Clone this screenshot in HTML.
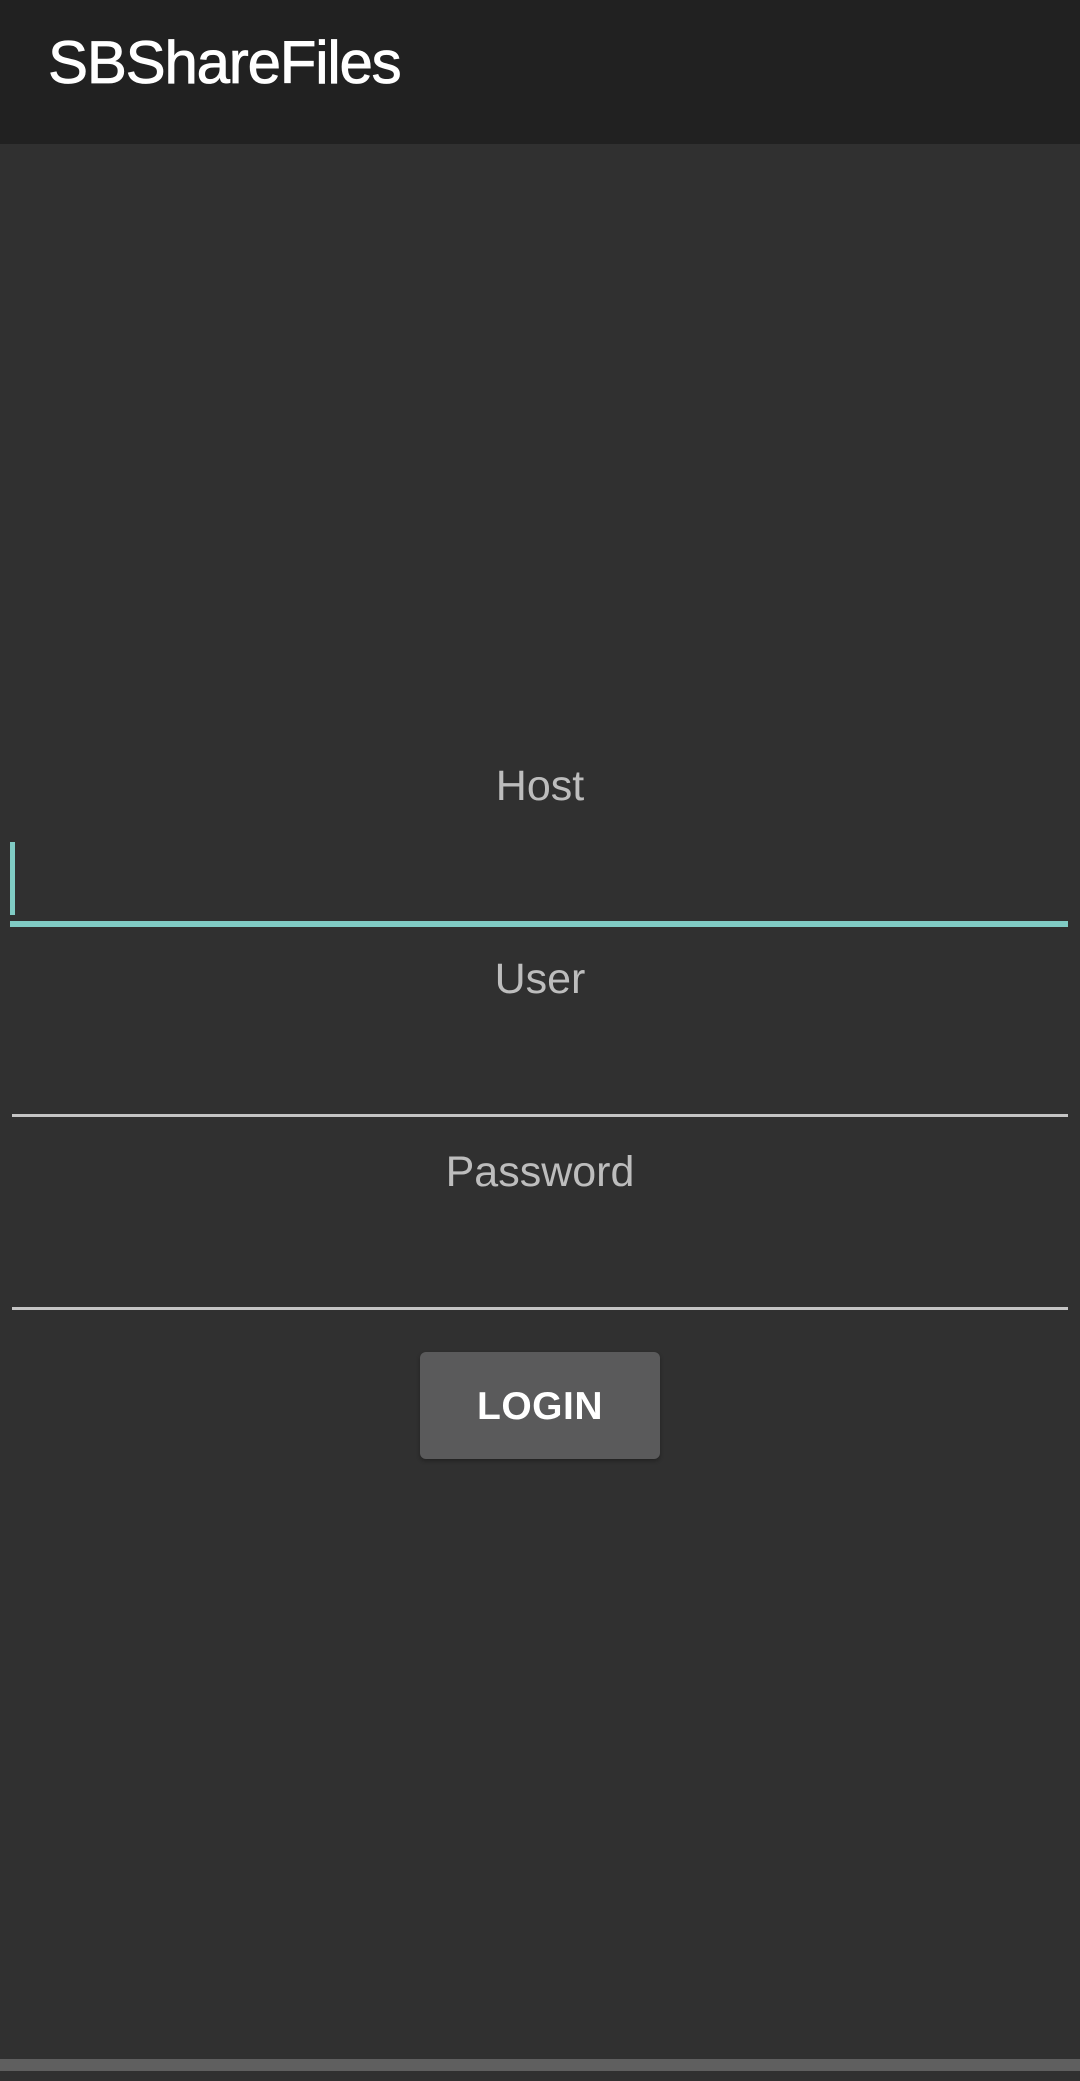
<!DOCTYPE html>
<html><head><meta charset="utf-8"><style>
*{margin:0;padding:0;box-sizing:border-box}
html,body{width:1080px;height:2081px;background:#303030;overflow:hidden;font-family:"Liberation Sans",sans-serif;position:relative}
.bar{position:absolute;left:0;top:0;width:1080px;height:144px;background:#212121}
.title{position:absolute;left:48px;top:33px;font-size:60px;line-height:60px;color:#fff;letter-spacing:-1.2px;-webkit-text-stroke:0.8px #fff}
.lbl{position:absolute;left:0;width:1080px;text-align:center;font-size:43px;line-height:43px;color:#bdbdbd}
.line{position:absolute;left:12px;width:1056px;height:3px;background:#c4c4c4}
.btn{position:absolute;left:420px;top:1352px;width:240px;height:107px;background:#5a5a5b;border-radius:6px;color:#fff;font-weight:bold;font-size:39px;line-height:109px;text-align:center;letter-spacing:0.5px;box-shadow:0 2px 4px rgba(0,0,0,.3)}
</style></head><body>
<div class="bar"><div class="title">SBShareFiles</div></div>
<div class="lbl" style="top:765px">Host</div>
<div style="position:absolute;left:10px;top:842px;width:5px;height:73px;background:#80cbc4"></div>
<div style="position:absolute;left:10px;top:921px;width:1058px;height:6px;background:#80cbc4"></div>
<div class="lbl" style="top:958px">User</div>
<div class="line" style="top:1114px"></div>
<div class="lbl" style="top:1151px">Password</div>
<div class="line" style="top:1307px"></div>
<div class="btn">LOGIN</div>
<div style="position:absolute;left:0;top:2059px;width:1080px;height:12px;background:#5f5f5f"></div>
</body></html>
